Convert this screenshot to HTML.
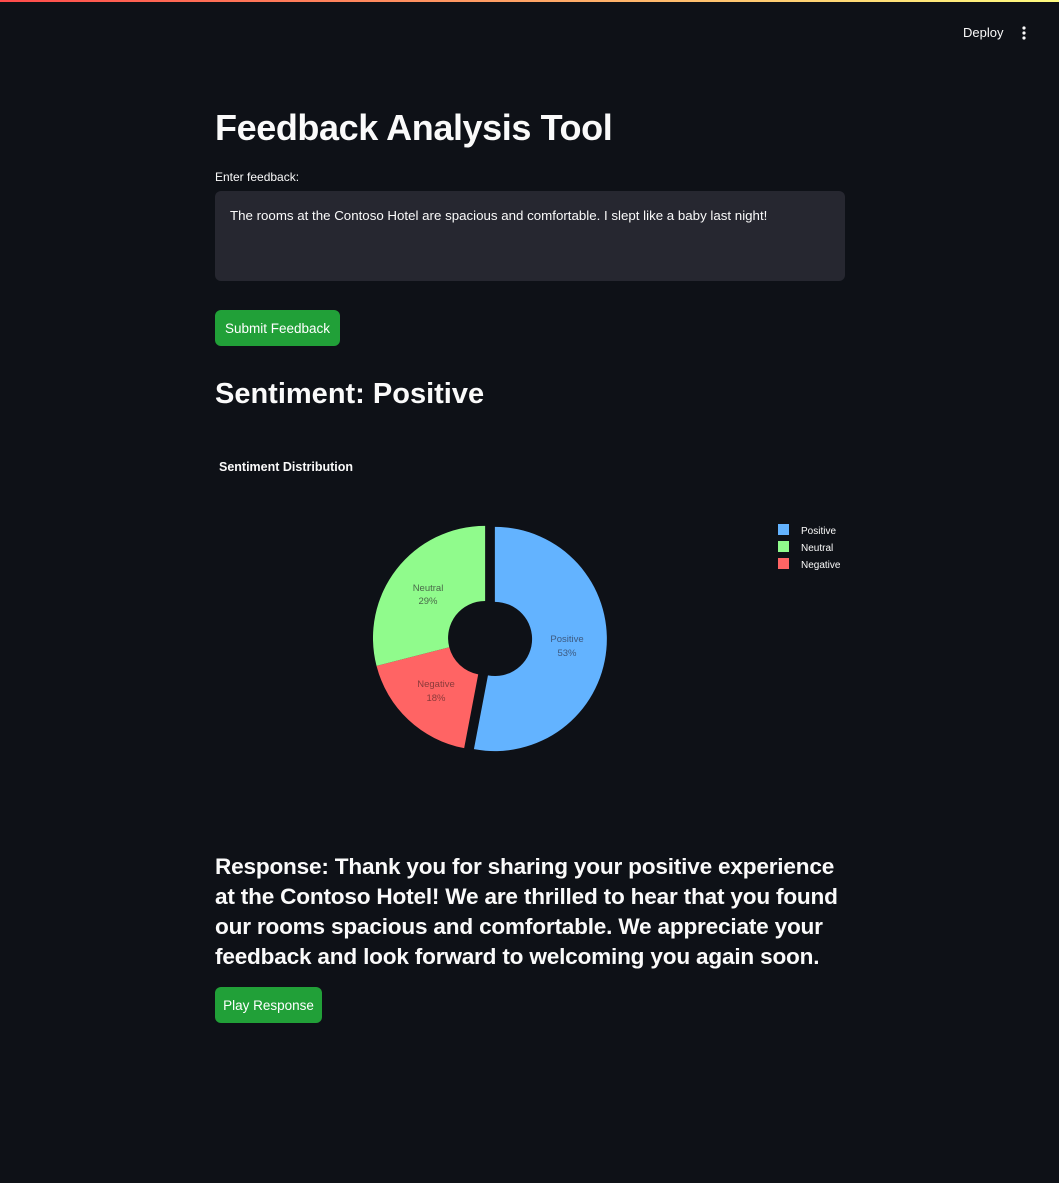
<!DOCTYPE html>
<html><head><meta charset="utf-8"><style>
body{margin:0;width:1059px;height:1183px;background:#0e1117;font-family:"Liberation Sans",sans-serif;color:#fafafa;position:relative;overflow:hidden}
.bar{position:absolute;top:0;left:0;right:0;height:2px;background:linear-gradient(90deg,#ff4b4b,#fffd80)}
.abs{position:absolute;white-space:nowrap}
.btn{position:absolute;background:#21a038;border-radius:6px;color:#fff;font-size:14px;display:flex;align-items:center;justify-content:center}
</style></head><body>
<div class="bar"></div>
<div class="abs" style="left:963px;top:25px;font-size:13px">Deploy</div>
<svg class="abs" style="left:1020px;top:25px" width="8" height="16"><circle cx="4" cy="3" r="1.6" fill="#fafafa"/><circle cx="4" cy="8" r="1.6" fill="#fafafa"/><circle cx="4" cy="13" r="1.6" fill="#fafafa"/></svg>
<div class="abs" style="left:215px;top:107px;font-size:36px;font-weight:bold;letter-spacing:-0.4px">Feedback Analysis Tool</div>
<div class="abs" style="left:215px;top:170px;font-size:12px">Enter feedback:</div>
<div class="abs" style="left:215px;top:191px;width:630px;height:90px;background:#262730;border-radius:6px"></div>
<div class="abs" style="left:230px;top:208px;font-size:13.3px;letter-spacing:0px">The rooms at the Contoso Hotel are spacious and comfortable. I slept like a baby last night!</div>
<div class="btn" style="left:215px;top:310px;width:125px;height:36px;font-size:13.5px">Submit Feedback</div>
<div class="abs" style="left:215px;top:378px;font-size:29px;font-weight:bold">Sentiment: Positive</div>
<div class="abs" style="left:219px;top:460px;font-size:12.5px;font-weight:bold">Sentiment Distribution</div>
<svg class="abs" style="left:0;top:0" width="1059" height="900" font-family="Liberation Sans,sans-serif" font-size="9.5">
<g transform="translate(490,638) scale(0.975) translate(-490,-638)">
<path d="M495,524 A115,115 0 1 1 473.5,752 L487.9,676.3 A38,38 0 1 0 495,601 Z" fill="#63b3ff"/>
<path d="M463.5,751 A115,115 0 0 1 373.6,666.6 L448.2,647.5 A38,38 0 0 0 477.9,675.3 Z" fill="#ff6464"/>
<path d="M373.6,666.6 A115,115 0 0 1 485,523 L485,600 A38,38 0 0 0 448.2,647.5 Z" fill="#90fb8c"/>
</g>
<g fill="#3d5a80" text-anchor="middle"><text x="567" y="642">Positive</text><text x="567" y="656">53%</text></g>
<g fill="#4a6a4a" text-anchor="middle"><text x="428" y="591">Neutral</text><text x="428" y="604">29%</text></g>
<g fill="#8a3a3a" text-anchor="middle"><text x="436" y="687">Negative</text><text x="436" y="701">18%</text></g>
<rect x="778" y="524" width="11" height="11" fill="#63b3ff"/><rect x="778" y="541" width="11" height="11" fill="#90fb8c"/><rect x="778" y="558" width="11" height="11" fill="#ff6464"/>
<g fill="#fafafa" font-size="10"><text x="801" y="534">Positive</text><text x="801" y="551">Neutral</text><text x="801" y="568">Negative</text></g>
</svg>
<div class="abs" style="left:215px;top:852px;font-size:22.6px;font-weight:bold;line-height:30px;letter-spacing:-0.2px">Response: Thank you for sharing your positive experience<br>at the Contoso Hotel! We are thrilled to hear that you found<br>our rooms spacious and comfortable. We appreciate your<br>feedback and look forward to welcoming you again soon.</div>
<div class="btn" style="left:215px;top:987px;width:107px;height:36px;font-size:13.5px">Play Response</div>
</body></html>
